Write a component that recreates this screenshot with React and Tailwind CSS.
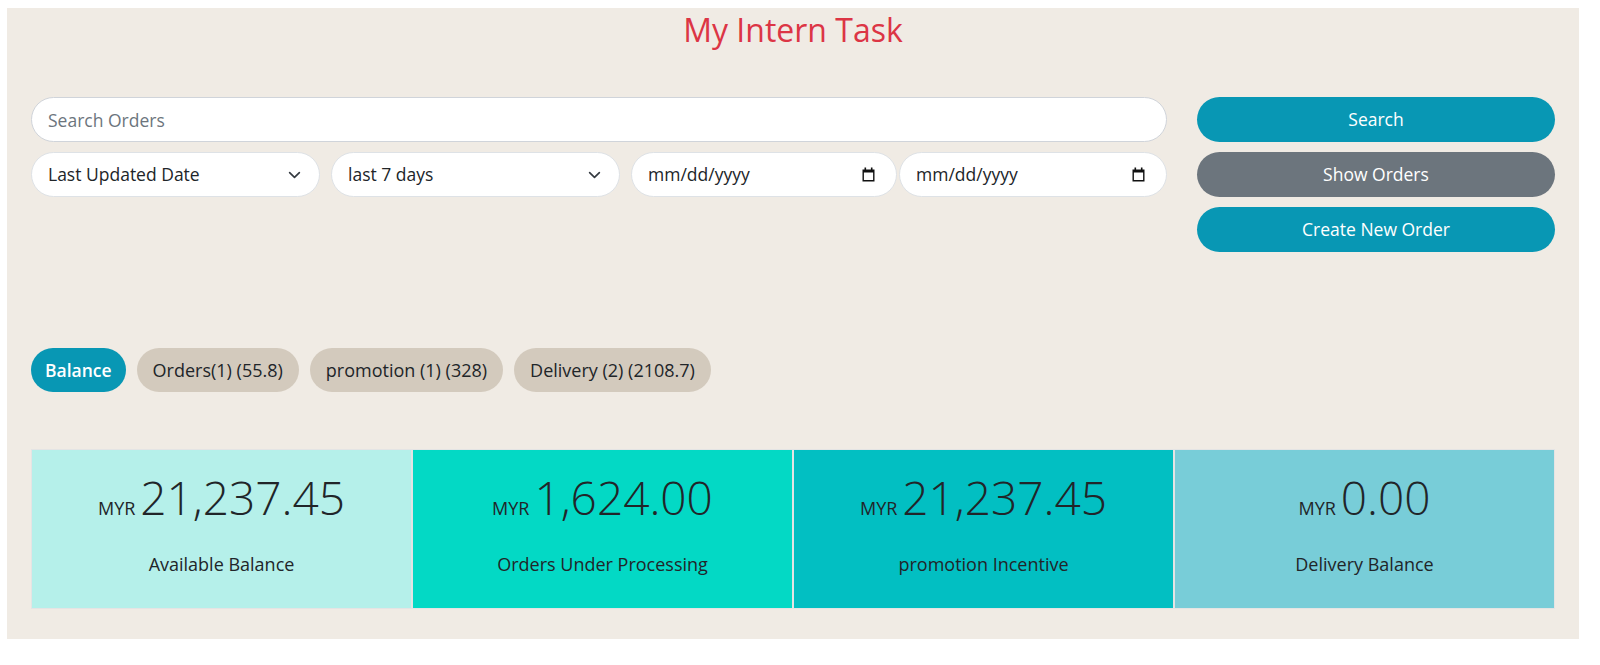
import React from 'react';

const font = { fontFamily: '"Open Sans", "Noto Sans", sans-serif' };

const cards = [
  { amount: '21,237.45', label: 'Available Balance', bg: 'bg-[#b5f0ea]' },
  { amount: '1,624.00', label: 'Orders Under Processing', bg: 'bg-[#03d9c5]' },
  { amount: '21,237.45', label: 'promotion Incentive', bg: 'bg-[#02bfc2]' },
  { amount: '0.00', label: 'Delivery Balance', bg: 'bg-[#78cdd8]' },
];

const chips = ['Orders(1) (55.8)', 'promotion (1) (328)', 'Delivery (2) (2108.7)'];

function Chevron() {
  return (
    <svg width="13" height="10" viewBox="0 0 16 12" className="pointer-events-none">
      <path d="m2 3 6 6 6-6" fill="none" stroke="#343a40" strokeWidth="2" strokeLinecap="round" strokeLinejoin="round" />
    </svg>
  );
}

function CalendarIcon() {
  return (
    <svg width="15" height="15" viewBox="0 0 15 15">
      <rect x="3.5" y="0.5" width="1.6" height="3" fill="#111" />
      <rect x="9.9" y="0.5" width="1.6" height="3" fill="#111" />
      <path d="M1.5 2.5h12v12h-12z M2.9 5.6v7.5h9.2V5.6z" fill="#111" fillRule="evenodd" />
    </svg>
  );
}

function SelectBox({ text, width }) {
  return (
    <div className={`${width} h-[45px] bg-white border border-[#dee2e6] rounded-full flex items-center justify-between pl-4 pr-[18px] text-[17.5px] text-[#212529]`}>
      <span>{text}</span>
      <Chevron />
    </div>
  );
}

function DateBox({ width }) {
  return (
    <div className={`${width} h-[45px] bg-white border border-[#dee2e6] rounded-full flex items-center justify-between pl-4 pr-[20px] text-[17.5px] text-[#212529]`}>
      <span>mm/dd/yyyy</span>
      <CalendarIcon />
    </div>
  );
}

export default function App() {
  return (
    <div className="bg-white h-[665px] pt-2 pl-[7px] pr-[21px]" style={font}>
      <div className="bg-[#f0ebe4] px-6 pt-[6px] pb-[30px]">
        <h1 className="text-center text-[32px] leading-[32px] text-[#dc3545]">My Intern Task</h1>

        <div className="mt-[51px] flex gap-[30px]">
          <div className="flex-1">
            <input
              type="text"
              placeholder="Search Orders"
              className="w-full h-[45px] bg-white border border-[#d0d4da] rounded-full px-4 text-[17.5px] text-[#212529] placeholder:text-[#6c757d] outline-none"
            />
            <div className="mt-[10px] flex">
              <SelectBox text="Last Updated Date" width="w-[289px]" />
              <div className="ml-[11px]">
                <SelectBox text="last 7 days" width="w-[289px]" />
              </div>
              <div className="ml-[11px]">
                <DateBox width="w-[266px]" />
              </div>
              <div className="ml-[2px]">
                <DateBox width="w-[268px]" />
              </div>
            </div>
          </div>

          <div className="w-[359px] flex flex-col gap-[10px]">
            <button className="h-[45px] rounded-full bg-[#0897b4] text-white text-[17.5px]">Search</button>
            <button className="h-[45px] rounded-full bg-[#6c757d] text-white text-[17.5px]">Show Orders</button>
            <button className="h-[45px] rounded-full bg-[#0897b4] text-white text-[17.5px]">Create New Order</button>
          </div>
        </div>

        <div className="mt-[96px] flex gap-[11px]">
          <button className="h-[44px] px-[14px] rounded-full bg-[#0897b4] text-white text-[17.5px] font-semibold">Balance</button>
          {chips.map((c) => (
            <button key={c} className="h-[44px] px-4 rounded-full bg-[#d3cabd] text-[#212529] text-[18px]">{c}</button>
          ))}
        </div>

        <div className="mt-[57px] grid grid-cols-4">
          {cards.map((c, i) => (
            <div key={i} className={`${c.bg} h-[160px] border border-[#e4e4e4] flex flex-col items-center pt-[24px] text-[#212529]`}>
              <div className="flex items-baseline leading-none">
                <span className="text-[18px] mr-[5px]">MYR</span>
                <span className="text-[46px] font-light">{c.amount}</span>
              </div>
              <div className="mt-[32px] text-[18px] leading-6">{c.label}</div>
            </div>
          ))}
        </div>
      </div>
    </div>
  );
}
